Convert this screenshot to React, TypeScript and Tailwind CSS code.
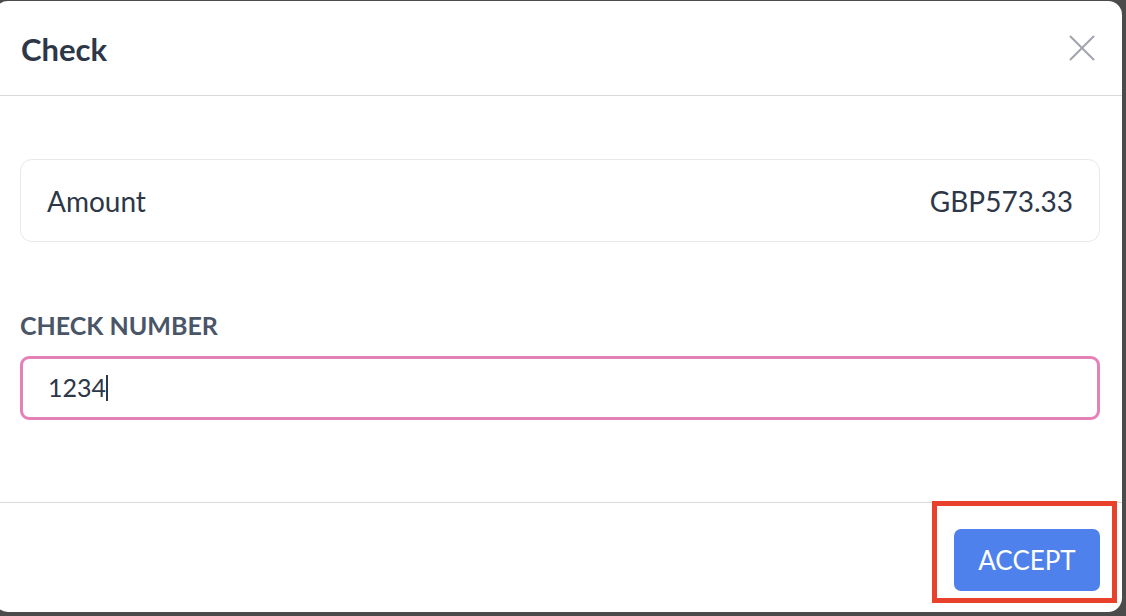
import { X } from "lucide-react";

const App = () => {
  return (
    <div
      className="relative w-[1126px] h-[616px] overflow-hidden bg-[#4b4b4b] pt-[1px]"
      style={{ fontFamily: "Lato, 'Noto Sans', sans-serif" }}
    >
      <div className="ml-[-6px] w-[1128px] h-[611px] bg-white rounded-[14px] flex flex-col">
        {/* header */}
        <div className="h-[95px] border-b border-[#d9d9dc] pl-[27px] pr-[17px] flex items-center justify-between">
          <h1 className="text-[31px] font-bold text-[#2d3748] leading-none mt-[2px]">Check</h1>
          <button className="text-[#a0a6b1]">
            <X size={46} strokeWidth={1.1} />
          </button>
        </div>

        {/* body */}
        <div className="pl-[26px] pr-[22px] pt-[63px] pb-[82px] border-b border-[#d9d9dc]">
          <div className="h-[83px] rounded-[12px] border border-[#e6e8ec] px-[26px] flex items-center justify-between text-[28px] text-[#2d3748]">
            <span>Amount</span>
            <span>GBP573.33</span>
          </div>

          <div className="mt-[69px] text-[25px] leading-[28px] font-bold text-[#4a5568]">CHECK NUMBER</div>

          <div className="mt-[17px] h-[64px] rounded-[9px] border-[3px] border-[#e481b8] pl-[25px] flex items-center text-[25px] text-[#2d3748]">
            <span>1234</span>
            <span className="w-[2px] h-[26px] bg-[#2d3748]" />
          </div>
        </div>

        {/* footer */}
        <div className="flex justify-end pl-[26px] pr-[22px] pt-[26px]">
          <button className="w-[146px] h-[62px] rounded-[7px] bg-[#4f81ec] text-white text-[26px]">
            ACCEPT
          </button>
        </div>
      </div>

      {/* highlight annotation */}
      <div className="absolute left-[932px] top-[501px] w-[185px] h-[102px] border-[5px] border-[#e8412c]" />
    </div>
  );
};

export default App;
